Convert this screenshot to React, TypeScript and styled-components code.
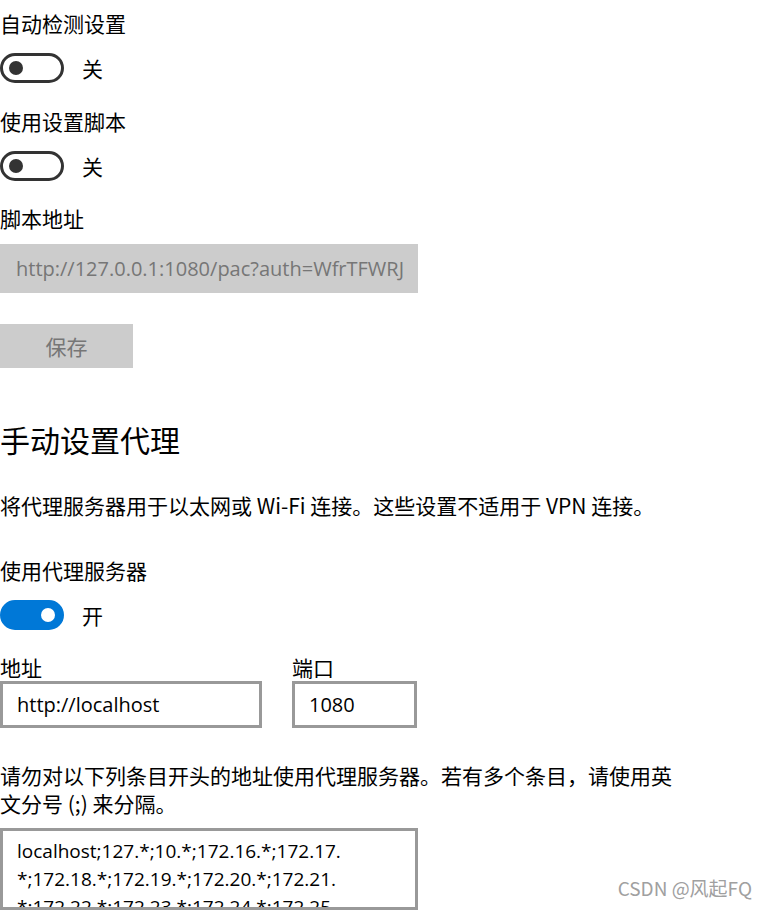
import styled, { createGlobalStyle } from 'styled-components';

const GlobalStyle = createGlobalStyle`
  html, body {
    margin: 0;
    padding: 0;
    background: #ffffff;
  }
  body {
    font-family: "Noto Sans CJK SC", "Noto Sans", sans-serif;
    color: #000000;
    overflow: hidden;
  }
`;

const BYPASS = [
  'localhost;127.*;10.*;172.16.*;172.17.',
  '*;172.18.*;172.19.*;172.20.*;172.21.',
  '*;172.22.*;172.23.*;172.24.*;172.25.',
];

interface ToggleProps {
  on?: boolean;
  label: string;
}

function Toggle({ on, label }: ToggleProps) {
  return (
    <ToggleRow>
      <Track $on={on}>
        <Knob $on={on} />
      </Track>
      <ToggleText>{label}</ToggleText>
    </ToggleRow>
  );
}

export default function App() {
  return (
    <>
      <GlobalStyle />
      <Page>
        <Label>自动检测设置</Label>
        <Toggle label="关" />

        <Label $top={24}>使用设置脚本</Label>
        <Toggle label="关" />

        <Label $top={23}>脚本地址</Label>
        <DisabledInput>http://127.0.0.1:1080/pac?auth=WfrTFWRJ</DisabledInput>
        <SaveButton>保存</SaveButton>

        <Heading>手动设置代理</Heading>
        <Description>
          将代理服务器用于以太网或 Wi-Fi 连接。这些设置不适用于 VPN 连接。
        </Description>

        <Label $top={37}>使用代理服务器</Label>
        <Toggle on label="开" />

        <Fields>
          <Field>
            <FieldLabel>地址</FieldLabel>
            <TextBox $width={262}>http://localhost</TextBox>
          </Field>
          <Field>
            <FieldLabel>端口</FieldLabel>
            <TextBox $width={125}>1080</TextBox>
          </Field>
        </Fields>

        <Note>
          请勿对以下列条目开头的地址使用代理服务器。若有多个条目，请使用英文分号 (;) 来分隔。
        </Note>
        <MultiBox>
          {BYPASS.map((line, i) => (
            <MultiLine key={i}>{line}</MultiLine>
          ))}
        </MultiBox>

        <Watermark>CSDN @风起FQ</Watermark>
      </Page>
    </>
  );
}

const Page = styled.div`
  position: relative;
  width: 766px;
  height: 910px;
  padding-top: 9px;
  box-sizing: border-box;
  display: flex;
  flex-direction: column;
  align-items: flex-start;
  overflow: hidden;
`;

const Label = styled.div<{ $top?: number }>`
  margin-top: ${(p) => p.$top || 0}px;
  font-size: 21px;
  line-height: 28px;
`;

const ToggleRow = styled.div`
  margin-top: 16px;
  display: flex;
  align-items: center;
  gap: 18px;
  height: 30px;
`;

const Track = styled.div<{ $on?: boolean }>`
  width: 64px;
  height: 30px;
  box-sizing: border-box;
  border-radius: 15px;
  border: 3px solid ${(p) => (p.$on ? '#0078d7' : '#333333')};
  background: ${(p) => (p.$on ? '#0078d7' : '#ffffff')};
  display: flex;
  align-items: center;
  justify-content: ${(p) => (p.$on ? 'flex-end' : 'flex-start')};
  padding: 0 6px;
`;

const Knob = styled.div<{ $on?: boolean }>`
  width: 14px;
  height: 14px;
  border-radius: 50%;
  background: ${(p) => (p.$on ? '#ffffff' : '#333333')};
`;

const ToggleText = styled.span`
  font-size: 21px;
  line-height: 28px;
`;

const DisabledInput = styled.div`
  margin-top: 12px;
  width: 418px;
  height: 49px;
  box-sizing: border-box;
  background: #cccccc;
  color: #767676;
  padding-left: 16px;
  display: flex;
  align-items: center;
  font-family: "Open Sans", "Noto Sans", sans-serif;
  font-size: 20px;
  white-space: nowrap;
  overflow: hidden;
`;

const SaveButton = styled.div`
  margin-top: 31px;
  width: 133px;
  height: 45px;
  background: #cccccc;
  color: #767676;
  display: flex;
  align-items: center;
  justify-content: center;
  font-size: 21px;
`;

const Heading = styled.div`
  margin-top: 51px;
  font-size: 30px;
  line-height: 40px;
`;

const Description = styled.div`
  margin-top: 32px;
  font-size: 21px;
  line-height: 28px;
  white-space: nowrap;
`;

const Fields = styled.div`
  margin-top: 24px;
  display: flex;
  gap: 30px;
`;

const Field = styled.div`
  display: flex;
  flex-direction: column;
  gap: 1px;
`;

const FieldLabel = styled.div`
  font-size: 21px;
  line-height: 26px;
`;

const TextBox = styled.div<{ $width: number }>`
  width: ${(p) => p.$width}px;
  height: 47px;
  box-sizing: border-box;
  border: 3px solid #999999;
  padding-left: 14px;
  display: flex;
  align-items: center;
  font-family: "Open Sans", "Noto Sans", sans-serif;
  font-size: 20px;
`;

const Note = styled.div`
  margin-top: 33px;
  width: 680px;
  font-size: 21px;
  line-height: 28px;
`;

const MultiBox = styled.div`
  margin-top: 11px;
  width: 418px;
  height: 82px;
  box-sizing: border-box;
  border: 3px solid #999999;
  padding: 6px 14px 0;
  overflow: hidden;
  font-family: "Open Sans", "Noto Sans", sans-serif;
  font-size: 19px;
  line-height: 28px;
`;

const MultiLine = styled.div`
  white-space: nowrap;
`;

const Watermark = styled.div`
  position: absolute;
  right: 14px;
  bottom: 9px;
  font-size: 19px;
  color: #a0a0a0;
  font-family: "Noto Sans CJK SC", sans-serif;
`;
